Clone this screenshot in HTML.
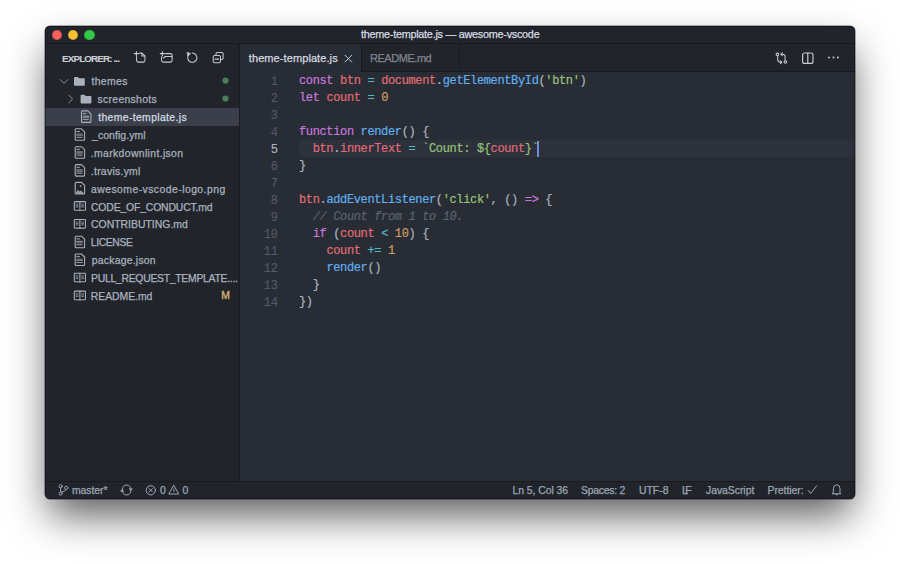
<!DOCTYPE html>
<html><head><meta charset="utf-8">
<style>
*{box-sizing:border-box;margin:0;padding:0}
html,body{width:900px;height:564px;overflow:hidden;background:#fff}
body{position:relative;font-family:"Liberation Sans",sans-serif}
.abs{position:absolute}
#win{position:absolute;left:45px;top:26px;width:809.5px;height:473px;border-radius:5px;background:#21252b;overflow:hidden;
 box-shadow:0 0 0 0.5px rgba(0,0,0,.6),0 20px 40px -4px rgba(0,0,0,.65)}
#pg{position:absolute;left:-45px;top:-26px;width:900px;height:564px}
.t{position:absolute;white-space:nowrap;line-height:12px;-webkit-text-stroke:0.25px currentColor}
.tl{position:absolute;width:10.5px;height:10.5px;border-radius:50%;box-shadow:inset 0 0 0 0.6px rgba(0,0,0,.18)}
.code{position:absolute;left:299px;font-family:"Liberation Mono",monospace;font-size:12px;letter-spacing:-0.36px;-webkit-text-stroke:0.2px currentColor;line-height:17px;white-space:pre;color:#abb2bf}
.ln{position:absolute;left:240px;width:37.5px;text-align:right;font-family:"Liberation Mono",monospace;font-size:12px;letter-spacing:-0.36px;-webkit-text-stroke:0.15px currentColor;line-height:17px;color:#535a68}
.k{color:#c678dd}.v{color:#e06c75}.o{color:#56b6c2}.f{color:#61afef}.s{color:#98c379}.n{color:#d19a66}.c{color:#5c6370;font-style:italic}
svg{position:absolute;overflow:visible}
</style></head><body>
<div id="win"><div id="pg">
<div class="abs" style="left:45px;top:43px;width:810px;height:1px;background:#181a1f"></div>
<div class="tl" style="left:51.5px;top:29.5px;background:#f6605a"></div>
<div class="tl" style="left:67.8px;top:29.5px;background:#f8bd30"></div>
<div class="tl" style="left:84px;top:29.5px;background:#33c648"></div>

<div class="abs" style="left:239.4px;top:44px;width:1px;height:437px;background:#181a1f"></div>
<div class="abs" style="left:361px;top:71px;width:494px;height:1px;background:#181a1f"></div>
<div class="abs" style="left:240px;top:44px;width:121px;height:28px;background:#282c34"></div>
<div class="abs" style="left:361px;top:44px;width:1px;height:28px;background:#181a1f"></div>
<div class="abs" style="left:459px;top:44px;width:1px;height:28px;background:#181a1f"></div>
<div class="abs" style="left:240px;top:72px;width:615px;height:409px;background:#282c34"></div>
<div class="abs" style="left:45px;top:481px;width:810px;height:1px;background:#181a1f"></div>

<!-- selected row -->
<div class="abs" style="left:45px;top:107.7px;width:194px;height:18.1px;background:#3a3f4b"></div>

<div class="t" id="r0" style="left:91.40px;top:76.40px;font-size:10.4px;letter-spacing:0.400px;color:#abb2bf;">themes</div>
<div class="t" id="r1" style="left:97.50px;top:94.28px;font-size:10.4px;letter-spacing:0.320px;color:#abb2bf;">screenshots</div>
<div class="t" id="r2" style="left:98.20px;top:112.15px;font-size:10.4px;letter-spacing:0.365px;color:#d7dae0;">theme-template.js</div>
<div class="t" id="r3" style="left:92.00px;top:130.03px;font-size:10.4px;letter-spacing:0.100px;color:#abb2bf;">_config.yml</div>
<div class="t" id="r4" style="left:90.80px;top:147.90px;font-size:10.4px;letter-spacing:0.364px;color:#abb2bf;">.markdownlint.json</div>
<div class="t" id="r5" style="left:90.80px;top:165.78px;font-size:10.4px;letter-spacing:0.280px;color:#abb2bf;">.travis.yml</div>
<div class="t" id="r6" style="left:91.00px;top:183.65px;font-size:10.4px;letter-spacing:0.455px;color:#abb2bf;">awesome-vscode-logo.png</div>
<div class="t" id="r7" style="left:91.00px;top:201.53px;font-size:10.4px;letter-spacing:-0.151px;color:#abb2bf;">CODE_OF_CONDUCT.md</div>
<div class="t" id="r8" style="left:91.00px;top:219.40px;font-size:10.4px;letter-spacing:0.029px;color:#abb2bf;">CONTRIBUTING.md</div>
<div class="t" id="r9" style="left:90.80px;top:237.28px;font-size:10.4px;letter-spacing:-0.399px;color:#abb2bf;">LICENSE</div>
<div class="t" id="r10" style="left:91.80px;top:255.15px;font-size:10.4px;letter-spacing:0.236px;color:#abb2bf;">package.json</div>
<div class="t" id="r11" style="left:91.00px;top:273.02px;font-size:10.4px;letter-spacing:-0.268px;color:#abb2bf;">PULL_REQUEST_TEMPLATE....</div>
<div class="t" id="r12" style="left:90.80px;top:290.90px;font-size:10.4px;letter-spacing:-0.025px;color:#abb2bf;">README.md</div>
<div class="t" id="M" style="left:221.30px;top:290.00px;font-size:10.4px;letter-spacing:0.000px;color:#cdb073;-webkit-text-stroke:0.4px currentColor">M</div>
<div class="t" id="expl" style="left:62.10px;top:53.10px;font-size:9.8px;letter-spacing:-0.850px;color:#c9cdd4;font-weight:bold;-webkit-text-stroke:0.1px currentColor">EXPLORER: ...</div>
<div class="t" id="tab1t" style="left:248.80px;top:52.00px;font-size:11px;letter-spacing:0.089px;color:#d7dae0;">theme-template.js</div>
<div class="t" id="tab2t" style="left:369.90px;top:52.00px;font-size:11px;letter-spacing:-0.447px;color:#80858f;">README.md</div>
<div class="t" id="title" style="left:361.00px;top:28.10px;font-size:10.8px;letter-spacing:-0.242px;color:#d7dae0;">theme-template.js — awesome-vscode</div>
<div class="t" id="s_master" style="left:71.90px;top:484.50px;font-size:10.4px;letter-spacing:-0.034px;color:#9da5b4;">master*</div>
<div class="t" id="s_e0" style="left:159.90px;top:484.50px;font-size:10.4px;letter-spacing:0.000px;color:#9da5b4;">0</div>
<div class="t" id="s_w0" style="left:182.50px;top:484.50px;font-size:10.4px;letter-spacing:0.000px;color:#9da5b4;">0</div>
<div class="t" id="s_ln" style="left:512.40px;top:484.50px;font-size:10.4px;letter-spacing:-0.034px;color:#9da5b4;">Ln 5, Col 36</div>
<div class="t" id="s_sp" style="left:581.00px;top:484.50px;font-size:10.4px;letter-spacing:-0.253px;color:#9da5b4;">Spaces: 2</div>
<div class="t" id="s_utf" style="left:639.00px;top:484.50px;font-size:10.4px;letter-spacing:0.000px;color:#9da5b4;">UTF-8</div>
<div class="t" id="s_lf" style="left:682.00px;top:484.50px;font-size:10.4px;letter-spacing:-2.500px;color:#9da5b4;">LF</div>
<div class="t" id="s_js" style="left:706.00px;top:484.50px;font-size:10.4px;letter-spacing:-0.024px;color:#9da5b4;">JavaScript</div>
<div class="t" id="s_pr" style="left:767.50px;top:484.50px;font-size:10.4px;letter-spacing:-0.030px;color:#9da5b4;">Prettier:</div>

<svg width="900" height="564" viewBox="0 0 900 564" style="left:0;top:0" fill="none" stroke-linecap="round" stroke-linejoin="round">
<!-- header icons -->
<g stroke="#c5cad3" stroke-width="1.05">
 <path d="M134.2 53.6 H138.6 M136.4 51.4 V55.8"/>
 <path d="M136.6 56.6 V60.6 Q136.6 62.1 138.1 62.1 H143.4 Q144.9 62.1 144.9 60.6 V55.9 L142 53.1 H139.6"/>
 <path d="M141.9 53.2 V55.9 H144.8"/>
 <path d="M160.2 53.6 H164.6 M162.4 51.4 V55.8"/>
 <path d="M161.6 56.6 V60.6 Q161.6 62.1 163.1 62.1 H170.6 Q172.1 62.1 172.1 60.6 V55 Q172.1 53.6 170.6 53.6 H165.6"/>
 <path d="M165.3 56.5 H172 M163.6 58 L165.3 56.5" />
 <path d="M192.4 53.1 A4.6 4.6 0 1 1 188.3 55.4"/>
 <path d="M187.4 52.4 L190.6 53.6 L188 55.9 Z" fill="#c5cad3" stroke-width="0.7"/>
 <path d="M216 54.5 V53.8 Q216 52.4 217.4 52.4 H221.7 Q223.1 52.4 223.1 53.8 V58.1 Q223.1 59.5 221.7 59.5 H220.7"/>
 <rect x="213.2" y="55.5" width="7.3" height="7.3" rx="1.5"/>
 <path d="M215 59.1 H218.8"/>
</g>
<!-- tree -->
<g stroke="#8a909b" stroke-width="1">
 <path d="M60.3 79.6 L64.1 83.4 L67.9 79.6"/>
 <path d="M68.8 95.2 L72.6 99 L68.8 102.8"/>
</g>
<g transform="translate(74 77)" fill="#aab0bb">
  <path d="M0 1 Q0 0 1 0 H4 L5 1.3 H10 Q10.8 1.3 10.8 2.1 V8 Q10.8 8.8 10 8.8 H0.8 Q0 8.8 0 8 Z"/>
 </g>
<g transform="translate(80.6 94.8)" fill="#aab0bb">
  <path d="M0 1 Q0 0 1 0 H4 L5 1.3 H10 Q10.8 1.3 10.8 2.1 V8 Q10.8 8.8 10 8.8 H0.8 Q0 8.8 0 8 Z"/>
 </g>
<g transform="translate(80.9 110.3)" stroke="#aab0bb" stroke-width="1.1">
  <path d="M0.6 1.6 Q0.6 0.6 1.6 0.6 H6.9 L10 3.6 V11.1 Q10 12.1 9 12.1 H1.6 Q0.6 12.1 0.6 11.1 Z"/>
  <path d="M2.3 3.3 H4.9" stroke-width="1"/>
  <path d="M2.2 5.8 H7.8 M2.2 7.1 H7.8" stroke="#7d838e" stroke-width="1.1"/>
  <path d="M2.3 9.1 H7.6" stroke-width="0.9"/>
 </g>
<g transform="translate(74.6 128.2)" stroke="#aab0bb" stroke-width="1.1">
  <path d="M0.6 1.6 Q0.6 0.6 1.6 0.6 H6.9 L10 3.6 V11.1 Q10 12.1 9 12.1 H1.6 Q0.6 12.1 0.6 11.1 Z"/>
  <path d="M2.3 3.3 H4.9" stroke-width="1"/>
  <path d="M2.2 5.8 H7.8 M2.2 7.1 H7.8" stroke="#7d838e" stroke-width="1.1"/>
  <path d="M2.3 9.1 H7.6" stroke-width="0.9"/>
 </g>
<g transform="translate(74.6 146.1)" stroke="#aab0bb" stroke-width="1.1">
  <path d="M0.6 1.6 Q0.6 0.6 1.6 0.6 H6.9 L10 3.6 V11.1 Q10 12.1 9 12.1 H1.6 Q0.6 12.1 0.6 11.1 Z"/>
  <path d="M2.3 3.3 H4.9" stroke-width="1"/>
  <path d="M2.2 5.8 H7.8 M2.2 7.1 H7.8" stroke="#7d838e" stroke-width="1.1"/>
  <path d="M2.3 9.1 H7.6" stroke-width="0.9"/>
 </g>
<g transform="translate(74.6 164)" stroke="#aab0bb" stroke-width="1.1">
  <path d="M0.6 1.6 Q0.6 0.6 1.6 0.6 H6.9 L10 3.6 V11.1 Q10 12.1 9 12.1 H1.6 Q0.6 12.1 0.6 11.1 Z"/>
  <path d="M2.3 3.3 H4.9" stroke-width="1"/>
  <path d="M2.2 5.8 H7.8 M2.2 7.1 H7.8" stroke="#7d838e" stroke-width="1.1"/>
  <path d="M2.3 9.1 H7.6" stroke-width="0.9"/>
 </g>
<g transform="translate(74.6 181.8)" stroke="#aab0bb" stroke-width="1.1">
  <path d="M0.6 1.6 Q0.6 0.6 1.6 0.6 H6.9 L10 3.6 V11.1 Q10 12.1 9 12.1 H1.6 Q0.6 12.1 0.6 11.1 Z"/>
  <circle cx="6" cy="4.3" r="0.9" fill="#aab0bb" stroke="none"/>
  <path d="M1 11.6 L3.2 8 L4.8 9.8 L6.2 8.6 L9.6 11.6 Z" fill="#9ba1ac" stroke="none"/>
 </g>
<g transform="translate(73.7 201)" stroke="#aab0bb" stroke-width="1.05">
  <path d="M0.6 1.4 Q0.6 0.6 1.4 0.6 H11 Q11.8 0.6 11.8 1.4 V8.4 Q11.8 9.2 11 9.2 H1.4 Q0.6 9.2 0.6 8.4 Z"/>
  <path d="M6.2 0.8 V9.6"/>
  <path d="M2.4 2.9 V7.2 M4.2 2.9 V7.2 M8.2 2.9 V7.2 M10 2.9 V7.2" stroke="#3c414b" stroke-width="0.9"/>
  <path d="M2.4 3.2 H4.2 M2.4 4.6 H4.2 M2.4 6 H4.2 M8.2 3.2 H10 M8.2 4.6 H10 M8.2 6 H10" stroke="#7a808b" stroke-width="0.9"/>
  <path d="M1.8 7.7 H5.2 M7.2 7.7 H10.6" stroke="#15171b" stroke-width="0.9"/>
 </g>
<g transform="translate(73.7 218.9)" stroke="#aab0bb" stroke-width="1.05">
  <path d="M0.6 1.4 Q0.6 0.6 1.4 0.6 H11 Q11.8 0.6 11.8 1.4 V8.4 Q11.8 9.2 11 9.2 H1.4 Q0.6 9.2 0.6 8.4 Z"/>
  <path d="M6.2 0.8 V9.6"/>
  <path d="M2.4 2.9 V7.2 M4.2 2.9 V7.2 M8.2 2.9 V7.2 M10 2.9 V7.2" stroke="#3c414b" stroke-width="0.9"/>
  <path d="M2.4 3.2 H4.2 M2.4 4.6 H4.2 M2.4 6 H4.2 M8.2 3.2 H10 M8.2 4.6 H10 M8.2 6 H10" stroke="#7a808b" stroke-width="0.9"/>
  <path d="M1.8 7.7 H5.2 M7.2 7.7 H10.6" stroke="#15171b" stroke-width="0.9"/>
 </g>
<g transform="translate(74.6 235.6)" stroke="#aab0bb" stroke-width="1.1">
  <path d="M0.6 1.6 Q0.6 0.6 1.6 0.6 H6.9 L10 3.6 V11.1 Q10 12.1 9 12.1 H1.6 Q0.6 12.1 0.6 11.1 Z"/>
  <path d="M2.3 3.3 H4.9" stroke-width="1"/>
  <path d="M2.2 5.8 H7.8 M2.2 7.1 H7.8" stroke="#7d838e" stroke-width="1.1"/>
  <path d="M2.3 9.1 H7.6" stroke-width="0.9"/>
 </g>
<g transform="translate(74.6 253.4)" stroke="#aab0bb" stroke-width="1.1">
  <path d="M0.6 1.6 Q0.6 0.6 1.6 0.6 H6.9 L10 3.6 V11.1 Q10 12.1 9 12.1 H1.6 Q0.6 12.1 0.6 11.1 Z"/>
  <path d="M2.3 3.3 H4.9" stroke-width="1"/>
  <path d="M2.2 5.8 H7.8 M2.2 7.1 H7.8" stroke="#7d838e" stroke-width="1.1"/>
  <path d="M2.3 9.1 H7.6" stroke-width="0.9"/>
 </g>
<g transform="translate(73.7 272.6)" stroke="#aab0bb" stroke-width="1.05">
  <path d="M0.6 1.4 Q0.6 0.6 1.4 0.6 H11 Q11.8 0.6 11.8 1.4 V8.4 Q11.8 9.2 11 9.2 H1.4 Q0.6 9.2 0.6 8.4 Z"/>
  <path d="M6.2 0.8 V9.6"/>
  <path d="M2.4 2.9 V7.2 M4.2 2.9 V7.2 M8.2 2.9 V7.2 M10 2.9 V7.2" stroke="#3c414b" stroke-width="0.9"/>
  <path d="M2.4 3.2 H4.2 M2.4 4.6 H4.2 M2.4 6 H4.2 M8.2 3.2 H10 M8.2 4.6 H10 M8.2 6 H10" stroke="#7a808b" stroke-width="0.9"/>
  <path d="M1.8 7.7 H5.2 M7.2 7.7 H10.6" stroke="#15171b" stroke-width="0.9"/>
 </g>
<g transform="translate(73.7 290.5)" stroke="#aab0bb" stroke-width="1.05">
  <path d="M0.6 1.4 Q0.6 0.6 1.4 0.6 H11 Q11.8 0.6 11.8 1.4 V8.4 Q11.8 9.2 11 9.2 H1.4 Q0.6 9.2 0.6 8.4 Z"/>
  <path d="M6.2 0.8 V9.6"/>
  <path d="M2.4 2.9 V7.2 M4.2 2.9 V7.2 M8.2 2.9 V7.2 M10 2.9 V7.2" stroke="#3c414b" stroke-width="0.9"/>
  <path d="M2.4 3.2 H4.2 M2.4 4.6 H4.2 M2.4 6 H4.2 M8.2 3.2 H10 M8.2 4.6 H10 M8.2 6 H10" stroke="#7a808b" stroke-width="0.9"/>
  <path d="M1.8 7.7 H5.2 M7.2 7.7 H10.6" stroke="#15171b" stroke-width="0.9"/>
 </g>
<circle cx="225.5" cy="80.6" r="3.1" fill="#4b7f5a"/>
<circle cx="225.5" cy="98.5" r="3.1" fill="#4b7f5a"/>
<!-- tab close -->
<path d="M345 55.2 L351.8 62 M351.8 55.2 L345 62" stroke="#c8ccd4" stroke-width="1"/>
<!-- editor actions -->
<g stroke="#c5cad3" stroke-width="1.05">
 <circle cx="777.4" cy="54.4" r="1.3"/>
 <path d="M777.7 55.8 V59.6 Q777.7 62.2 780.4 62.2 H781.6"/>
 <path d="M780.4 60.8 L782 62.2 L780.4 63.6" />
 <circle cx="785.4" cy="62" r="1.3"/>
 <path d="M785.1 60.6 V56.8 Q785.1 54.2 782.4 54.2 H781.2"/>
 <path d="M782.4 52.8 L780.8 54.2 L782.4 55.6"/>
 <rect x="802.6" y="53" width="10.4" height="10.4" rx="2" stroke-width="1.15"/>
 <path d="M807.8 53.2 V63.2" stroke-width="1.15"/>
</g>
<g fill="#c5cad3">
 <circle cx="829" cy="57.6" r="1"/><circle cx="833.5" cy="57.6" r="1"/><circle cx="837.9" cy="57.6" r="1"/>
</g>
<!-- status icons -->
<g stroke="#9da5b4" stroke-width="1">
 <circle cx="60.6" cy="486.3" r="1.6" stroke-width="0.95"/>
 <circle cx="60.6" cy="493.6" r="1.6" stroke-width="0.95"/>
 <circle cx="66.2" cy="487.9" r="1.6" stroke-width="0.95"/>
 <path d="M60.6 487.9 V492"/>
 <path d="M66 489.5 Q65.8 491.4 61.4 492.2"/>
 <path d="M122.3 489.3 A4.3 4.3 0 0 1 130.9 489.3"/>
 <path d="M130.9 490.7 A4.3 4.3 0 0 1 122.3 490.7"/>
 <path d="M129.5 488.7 L132.3 488.7 L130.9 490.5 Z" fill="#9da5b4" stroke-width="0.6"/>
 <path d="M120.9 491.3 L123.7 491.3 L122.3 489.5 Z" fill="#9da5b4" stroke-width="0.6"/>
 <circle cx="150.8" cy="490.3" r="4.6"/>
 <path d="M149.1 488.6 L152.5 492 M152.5 488.6 L149.1 492"/>
 <path d="M173.9 485.6 L178.7 494 H169.1 Z"/>
 <path d="M173.9 489 V491.4"/>
 <path d="M808.2 490.4 L810.7 493.5 L816.6 485.9"/>
 <path d="M833.4 492.8 V488.6 A3.3 3.8 0 0 1 840 488.6 V492.8 L841 493.8 H832.4 Z"/>
 <path d="M835.6 494.4 Q836.7 495.8 837.8 494.4"/>
</g>
</svg>


<!-- line numbers -->
<div class="ln" style="top:74.1px">1<br>2<br>3<br>4<br><span style="color:#abb2bf">5</span><br>6<br>7<br>8<br>9<br>10<br>11<br>12<br>13<br>14</div>
<div class="abs" style="left:299px;top:139.8px;width:556px;height:17px;background:#2c313c"></div>
<div class="code" style="top:73.2px"><span class="k">const</span> <span class="v">btn</span> <span class="o">=</span> <span class="v">document</span>.<span class="f">getElementById</span>(<span class="s">'btn'</span>)
<span class="k">let</span> <span class="v">count</span> <span class="o">=</span> <span class="n">0</span>

<span class="k">function</span> <span class="f">render</span>() {
  <span class="v">btn</span>.<span class="v">innerText</span> <span class="o">=</span> <span class="s">`Count: ${</span><span class="v">count</span><span class="s">}`</span>
}

<span class="v">btn</span>.<span class="f">addEventListener</span>(<span class="s">'click'</span>, () <span class="k">=&gt;</span> {
  <span class="c">// Count from 1 to 10.</span>
  <span class="k">if</span> (<span class="v">count</span> <span class="o">&lt;</span> <span class="n">10</span>) {
    <span class="v">count</span> <span class="o">+=</span> <span class="n">1</span>
    <span class="f">render</span>()
  }
})</div>
<div class="abs" style="left:537px;top:140.5px;width:2px;height:16px;background:#6a8edb"></div>
</div><div style="position:absolute;left:0;top:0;right:0;bottom:0;border-radius:5px;box-shadow:inset 0 0 0 1px rgba(0,0,0,.35)"></div></div>
</body></html>
